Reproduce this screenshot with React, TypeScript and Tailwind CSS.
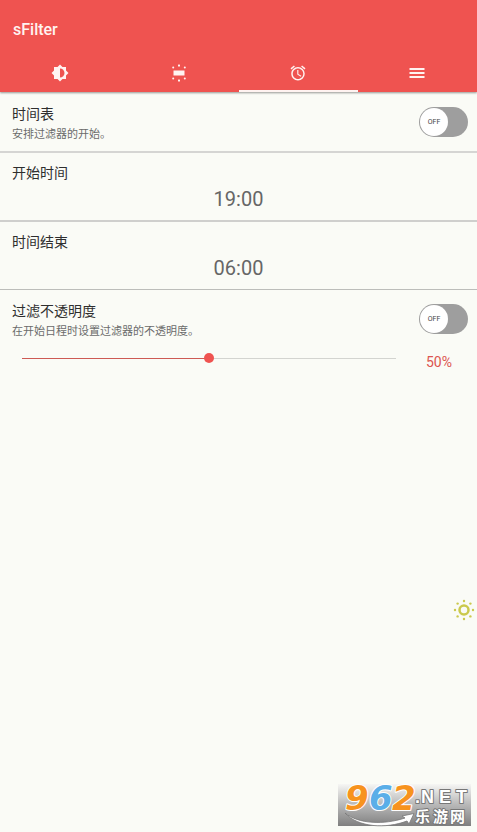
import { useState } from "react";

const SANS = "font-['Roboto','Noto_Sans_CJK_SC',sans-serif]";

function ContrastIcon() {
  return (
    <svg viewBox="0 0 24 24" className="size-[18px]" fill="currentColor" aria-hidden="true">
      <path d="M20 15.31 23.31 12 20 8.69V4h-4.69L12 .69 8.69 4H4v4.69L.69 12 4 15.31V20h4.69L12 23.31 15.31 20H20v-4.69zM12 18V6c3.31 0 6 2.69 6 6s-2.69 6-6 6z" />
    </svg>
  );
}

function ScreenLightIcon() {
  return (
    <svg viewBox="0 0 18 18" className="size-[18px]" fill="currentColor" aria-hidden="true">
      <rect x="3.5" y="6.5" width="11" height="5" />
      <rect x="8" y="0.5" width="2" height="2" rx="0.5" />
      <rect x="8" y="15.5" width="2" height="2" rx="0.5" />
      <circle cx="3.2" cy="3.4" r="1" />
      <circle cx="14.8" cy="3.4" r="1" />
      <circle cx="3.2" cy="14.6" r="1" />
      <circle cx="14.8" cy="14.6" r="1" />
    </svg>
  );
}

function AlarmIcon() {
  return (
    <svg viewBox="0 0 24 24" className="size-[18px]" fill="currentColor" aria-hidden="true">
      <path d="M22 5.72l-4.6-3.86-1.29 1.53 4.6 3.86L22 5.72zM7.88 3.39 6.6 1.86 2 5.71l1.29 1.53 4.59-3.85zM12.5 8H11v6l4.75 2.85.75-1.23-4-2.37V8zM12 4c-4.97 0-9 4.03-9 9s4.02 9 9 9a9 9 0 0 0 0-18zm0 16c-3.87 0-7-3.13-7-7s3.13-7 7-7 7 3.13 7 7-3.13 7-7 7z" />
    </svg>
  );
}

function MenuIcon() {
  return (
    <svg viewBox="0 0 18 18" className="size-[18px]" fill="currentColor" aria-hidden="true">
      <path d="M1.5 4h15v2h-15zM1.5 8h15v2h-15zM1.5 12h15v2h-15z" />
    </svg>
  );
}

const tabs = [
  { label: "亮度", Icon: ContrastIcon },
  { label: "屏幕", Icon: ScreenLightIcon },
  { label: "时间表", Icon: AlarmIcon },
  { label: "菜单", Icon: MenuIcon },
];

function Toggle({ id }: { id: string }) {
  const [on, setOn] = useState(false);
  return (
    <div className="grid h-[30px] w-[49px] shrink-0 items-center">
      <input
        id={id}
        type="checkbox"
        role="switch"
        checked={on}
        onChange={(e) => setOn(e.target.checked)}
        className="col-start-1 row-start-1 h-[30px] w-[49px] cursor-pointer appearance-none rounded-full bg-[#9e9e9e] checked:bg-[#ef5350]"
      />
      <span
        className={
          "pointer-events-none col-start-1 row-start-1 mx-px flex size-7 items-center justify-center rounded-full bg-white text-[7px] text-[#444] " +
          (on ? "justify-self-end" : "justify-self-start")
        }
      >
        {on ? "ON" : "OFF"}
      </span>
    </div>
  );
}

function SettingHeader({ id, title, note }: { id: string; title: string; note: string }) {
  return (
    <div className="flex items-start justify-between">
      <label htmlFor={id}>
        <span className="block text-sm leading-5 text-[#2e2e2e]">{title}</span>
        <span className="block text-[11px] leading-[22px] text-[#6b6b6b]">{note}</span>
      </label>
      <div className="pt-[3px]">
        <Toggle id={id} />
      </div>
    </div>
  );
}

function TimeRow({ title, value, line }: { title: string; value: string; line: string }) {
  return (
    <section className={"px-3 pt-2.5 pb-[9px] " + line}>
      <h2 className="text-sm leading-5 text-[#2e2e2e]">{title}</h2>
      <button type="button" aria-label={title + " " + value} className="mt-1 block w-full text-center text-xl leading-6 text-[#666]">
        {value}
      </button>
    </section>
  );
}

function Watermark() {
  return (
    <svg viewBox="0 -8 133 56" className="absolute right-1.5 bottom-0 h-14 w-[133px]" role="img" aria-label="962.NET 乐游网">
      <defs>
        <linearGradient id="plate" x1="0" y1="0" x2="0" y2="1">
          <stop offset="0" stopColor="#f6f6f4" />
          <stop offset="0.45" stopColor="#bdbdbd" />
          <stop offset="1" stopColor="#7f7f7f" />
        </linearGradient>
      </defs>
      <rect width="133" height="42" fill="url(#plate)" />
      <path d="M7 29C20 40 46 41 67 34L64 32 76 29.500 71 40 69 37C48 45 20 43.500 7 29z" fill="#fff" stroke="#777" strokeWidth="0.8" />
      <g fontFamily="'DejaVu Sans', sans-serif" fontWeight="700" strokeLinejoin="round" paintOrder="stroke">
        <g fontSize="34" fontStyle="oblique" stroke="#fff" strokeWidth="2">
          <text x="7" y="26" fill="#f7931e">9</text>
          <text x="31" y="26" fill="#5aaee8">6</text>
          <text x="54" y="26" fill="#f7931e">2</text>
        </g>
        <g fill="#fff" stroke="#777" strokeWidth="2" fontFamily="'Liberation Sans', sans-serif" fontSize="18">
          <text x="77" y="19">.</text>
          <text x="83" y="19">N</text>
          <text x="101" y="19">E</text>
          <text x="118" y="19">T</text>
        </g>
        <g fill="#fff" stroke="#777" strokeWidth="2" fontFamily="'Noto Sans CJK SC', sans-serif" fontSize="15">
          <text x="77" y="38">乐</text>
          <text x="95" y="38">游</text>
          <text x="112" y="38">网</text>
        </g>
      </g>
    </svg>
  );
}

export default function App() {
  const [active, setActive] = useState(2);
  const [opacity, setOpacity] = useState(50);

  return (
    <div className={"relative min-h-screen bg-[#fafbf6] " + SANS}>
      <header className="bg-[#ef5350] text-[#fff3f1] shadow-[0_1px_2px_rgba(0,0,0,0.4)]">
        <h1 className="flex h-14 items-center px-[13px] pt-[3px] text-base font-medium">sFilter</h1>
        <nav className="grid h-9 grid-cols-4">
          {tabs.map(({ label, Icon }, i) => (
            <button
              key={label}
              type="button"
              aria-label={label}
              aria-current={i === active ? "page" : undefined}
              onClick={() => setActive(i)}
              className={
                "flex items-center justify-center border-b-2 " +
                (i === active ? "border-[#fff3f1]" : "border-transparent")
              }
            >
              <Icon />
            </button>
          ))}
        </nav>
      </header>

      <main>
        <section className="border-b-2 border-[#d5d5d3] pt-3 pr-[9px] pb-[5px] pl-3">
          <SettingHeader id="schedule" title="时间表" note="安排过滤器的开始。" />
        </section>

        <TimeRow title="开始时间" value="19:00" line="border-b-2 border-[#cfcfcd]" />
        <TimeRow title="时间结束" value="06:00" line="border-b border-[#bcbdba]" />

        <section className="pt-[11px] pr-[9px] pl-3">
          <SettingHeader id="custom-opacity" title="过滤不透明度" note="在开始日程时设置过滤器的不透明度。" />
          <div className="mt-[9px] flex items-start pl-2.5">
            <input
              type="range"
              min={0}
              max={100}
              value={opacity}
              aria-label="过滤不透明度"
              onChange={(e) => setOpacity(Number(e.target.value))}
              style={{
                backgroundImage: `linear-gradient(to right, #cd5a54 ${opacity}%, #d3d4d0 ${opacity}%)`,
              }}
              className="mt-px h-2.5 min-w-0 flex-1 appearance-none bg-transparent bg-[length:100%_1px] bg-center bg-no-repeat [&::-webkit-slider-thumb]:size-2.5 [&::-webkit-slider-thumb]:appearance-none [&::-webkit-slider-thumb]:rounded-full [&::-webkit-slider-thumb]:bg-[#ef5350]"
            />
            <output className="ml-3.5 w-[58px] text-center text-sm leading-5 text-[#dc5550]">{opacity}%</output>
          </div>
        </section>
      </main>

      <svg viewBox="0 0 22 22" className="fixed top-[599px] right-0.5 size-[22px]" fill="#cbc94c" aria-hidden="true">
        <circle cx="11" cy="11" r="4.5" fill="none" stroke="#cbc94c" strokeWidth="2.5" />
        <circle cx="11" cy="2" r="1.2" />
        <circle cx="11" cy="20" r="1.2" />
        <circle cx="2" cy="11" r="1.2" />
        <circle cx="20" cy="11" r="1.2" />
        <circle cx="4.6" cy="4.6" r="1.2" />
        <circle cx="17.4" cy="4.6" r="1.2" />
        <circle cx="4.6" cy="17.4" r="1.2" />
        <circle cx="17.4" cy="17.4" r="1.2" />
      </svg>

      <Watermark />
    </div>
  );
}
